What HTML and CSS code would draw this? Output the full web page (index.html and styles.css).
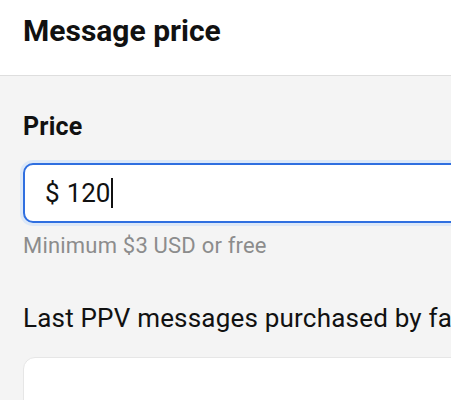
FILE: index.html
```html
<!DOCTYPE html>
<html lang="en">
<head>
    <meta charset="UTF-8">
    <meta name="viewport" content="width=device-width, initial-scale=1.0">
    <title>Message price</title>
    <link rel="stylesheet" href="styles.css">
</head>
<body>

    <header class="topbar">
        <h1>Message price</h1>
    </header>

    <main class="content">
        <label class="field-label" for="price">Price</label>
        <div class="price-input">
            <span class="currency">$</span>
            <span class="value">120</span><span class="caret"></span>
        </div>
        <p class="hint">Minimum $3 USD or free</p>

        <h2 class="section-title">Last PPV messages purchased by fan</h2>
        <div class="card"></div>
    </main>

</body>
</html>
```

FILE: styles.css
```css
:root {
    --bg: #f4f4f4;
    --white: #ffffff;
    --text: #111111;
    --muted: #8c8c8c;
    --blue: #2f6fe0;
    --glow: #dce8f8;
    --line: #dedede;
}

html, body {
    height: 100%;
    overflow: hidden;
}

body {
    margin: 0;
    font-family: Roboto, "Noto Sans", Arial, sans-serif;
    background-color: var(--bg);
    color: var(--text);
}

.topbar {
    background-color: var(--white);
    border-bottom: 1px solid var(--line);
    height: 75px;
    padding: 0 23px;
    display: flex;
    align-items: center;
}

.topbar h1 {
    margin: 0;
    font-size: 30px;
    font-weight: 700;
    margin-top: -14px;
}

.content {
    width: 620px;
    padding: 36px 23px 0;
}

.field-label {
    display: block;
    font-size: 25px;
    font-weight: 700;
    letter-spacing: 0.2px;
    line-height: 30px;
}

.price-input {
    margin-top: 21px;
    height: 56px;
    background-color: var(--white);
    border: 2px solid var(--blue);
    border-radius: 10px;
    box-shadow: 0 0 0 3px var(--glow);
    display: flex;
    align-items: center;
    padding-left: 20px;
    font-size: 26px;
}

.currency {
    margin-right: 7px;
}

.caret {
    display: inline-block;
    width: 2px;
    height: 30px;
    background-color: var(--text);
    margin-left: 1px;
}

.hint {
    margin: 10px 0 0;
    font-size: 22px;
    letter-spacing: 0.2px;
    line-height: 26px;
    color: var(--muted);
}

.section-title {
    margin: 43px 0 0;
    font-size: 26px;
    font-weight: 400;
    letter-spacing: 0.2px;
    line-height: 32px;
    white-space: nowrap;
}

.card {
    margin-top: 23px;
    height: 120px;
    background-color: var(--white);
    border: 1px solid #e6e6e6;
    border-radius: 12px;
}
```
